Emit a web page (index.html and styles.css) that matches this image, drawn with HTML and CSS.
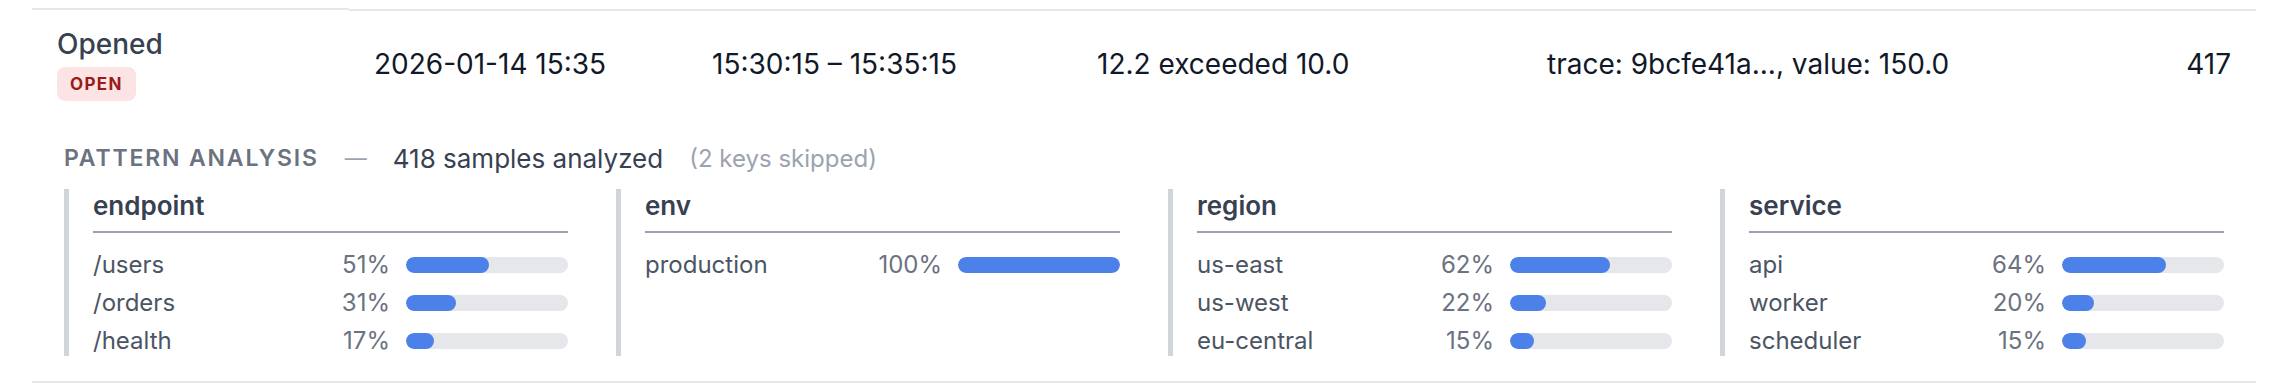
FILE: index.html
```html
<!DOCTYPE html>
<html lang="en">

<head>
    <meta charset="UTF-8">
    <meta name="viewport" content="width=device-width, initial-scale=1.0">
    <link rel="stylesheet" href="styles.css">
    <title>Alert history</title>
</head>

<body>

    <div id="wrap">
        <div class="alert-row">
            <div class="cell cell-status">
                <div class="status">Opened</div>
                <span class="badge">OPEN</span>
            </div>
            <div class="cell">2026-01-14 15:35</div>
            <div class="cell">15:30:15 – 15:35:15</div>
            <div class="cell">12.2 exceeded 10.0</div>
            <div class="cell">trace: 9bcfe41a..., value: 150.0</div>
            <div class="cell cell-count">417</div>
        </div>

        <div class="analysis">
            <div class="analysis-head">
                <span class="analysis-title">Pattern analysis</span>
                <span class="dash">—</span>
                <span class="samples">418 samples analyzed</span>
                <span class="skipped">(2 keys skipped)</span>
            </div>

            <div class="groups">
                <div class="group">
                    <div class="group-name">endpoint</div>
                    <div class="item">
                        <span class="label">/users</span>
                        <span class="pct">51%</span>
                        <div class="track"><div class="fill" style="width: 51%"></div></div>
                    </div>
                    <div class="item">
                        <span class="label">/orders</span>
                        <span class="pct">31%</span>
                        <div class="track"><div class="fill" style="width: 31%"></div></div>
                    </div>
                    <div class="item">
                        <span class="label">/health</span>
                        <span class="pct">17%</span>
                        <div class="track"><div class="fill" style="width: 17%"></div></div>
                    </div>
                </div>

                <div class="group">
                    <div class="group-name">env</div>
                    <div class="item">
                        <span class="label">production</span>
                        <span class="pct">100%</span>
                        <div class="track"><div class="fill" style="width: 100%"></div></div>
                    </div>
                </div>

                <div class="group">
                    <div class="group-name">region</div>
                    <div class="item">
                        <span class="label">us-east</span>
                        <span class="pct">62%</span>
                        <div class="track"><div class="fill" style="width: 62%"></div></div>
                    </div>
                    <div class="item">
                        <span class="label">us-west</span>
                        <span class="pct">22%</span>
                        <div class="track"><div class="fill" style="width: 22%"></div></div>
                    </div>
                    <div class="item">
                        <span class="label">eu-central</span>
                        <span class="pct">15%</span>
                        <div class="track"><div class="fill" style="width: 15%"></div></div>
                    </div>
                </div>

                <div class="group">
                    <div class="group-name">service</div>
                    <div class="item">
                        <span class="label">api</span>
                        <span class="pct">64%</span>
                        <div class="track"><div class="fill" style="width: 64%"></div></div>
                    </div>
                    <div class="item">
                        <span class="label">worker</span>
                        <span class="pct">20%</span>
                        <div class="track"><div class="fill" style="width: 20%"></div></div>
                    </div>
                    <div class="item">
                        <span class="label">scheduler</span>
                        <span class="pct">15%</span>
                        <div class="track"><div class="fill" style="width: 15%"></div></div>
                    </div>
                </div>
            </div>
        </div>
    </div>

</body>

</html>
```

FILE: styles.css
```css
* {
    margin: 0;
    padding: 0;
    box-sizing: border-box;
}

body {
    background-color: #fff;
    font-family: Inter, "Noto Sans", sans-serif;
    color: #111827;
}

#wrap {
    margin: 0 32px;
    padding-top: 8px;
    border-bottom: 2px solid #e5e7eb;
}

/* top table row */
.alert-row {
    display: grid;
    grid-template-columns: 317px 338px 385px 450px 1fr auto;
    align-items: stretch;
}

.cell {
    display: flex;
    align-items: center;
    padding: 14px 25px;
    border-top: 2px solid #e5e7eb;
    margin-top: 1px;
    font-size: 28px;
    line-height: 40px;
}

.cell-status {
    flex-direction: column;
    align-items: flex-start;
    margin-top: 0;
    padding-bottom: 15px;
}

.cell-count {
    justify-content: flex-end;
}

.status {
    font-weight: 500;
    color: #374151;
}

.badge {
    margin-top: 3px;
    padding: 5px 13px;
    border-radius: 8px;
    background-color: #fde4e4;
    color: #991b1b;
    font-size: 17px;
    line-height: 24px;
    font-weight: 700;
    letter-spacing: 0.08em;
}

/* pattern analysis */
.analysis {
    padding: 24px 32px 25px;
}

.analysis-head {
    display: flex;
    align-items: center;
    gap: 26px;
    height: 36px;
    margin-bottom: 13px;
    font-size: 24px;
}

.analysis-title {
    font-size: 23px;
    font-weight: 600;
    text-transform: uppercase;
    letter-spacing: 0.08em;
    color: #6b7280;
}

.dash {
    color: #9ca3af;
    font-size: 22px;
}

.samples {
    font-size: 26px;
    color: #374151;
}

.skipped {
    color: #9ca3af;
}

.groups {
    display: grid;
    grid-template-columns: repeat(4, 1fr);
    gap: 48px;
}

.group {
    border-left: 5px solid #d1d5db;
    padding-left: 24px;
    min-height: 167px;
}

.group-name {
    padding-bottom: 8px;
    margin-bottom: 17px;
    border-bottom: 2px solid #9ca3af;
    font-size: 26px;
    line-height: 34px;
    font-weight: 600;
    color: #374151;
}

.item {
    display: grid;
    grid-template-columns: 1fr auto 162px;
    align-items: center;
    column-gap: 16px;
    margin-bottom: 8px;
    font-size: 24px;
    line-height: 30px;
}

.item:last-child {
    margin-bottom: 0;
}

.label {
    color: #4b5563;
}

.pct {
    text-align: right;
    color: #6b7280;
}

.track {
    height: 16px;
    border-radius: 8px;
    background-color: #e5e7eb;
    overflow: hidden;
}

.fill {
    height: 100%;
    border-radius: 8px;
    background-color: #4c81e9;
}
```
